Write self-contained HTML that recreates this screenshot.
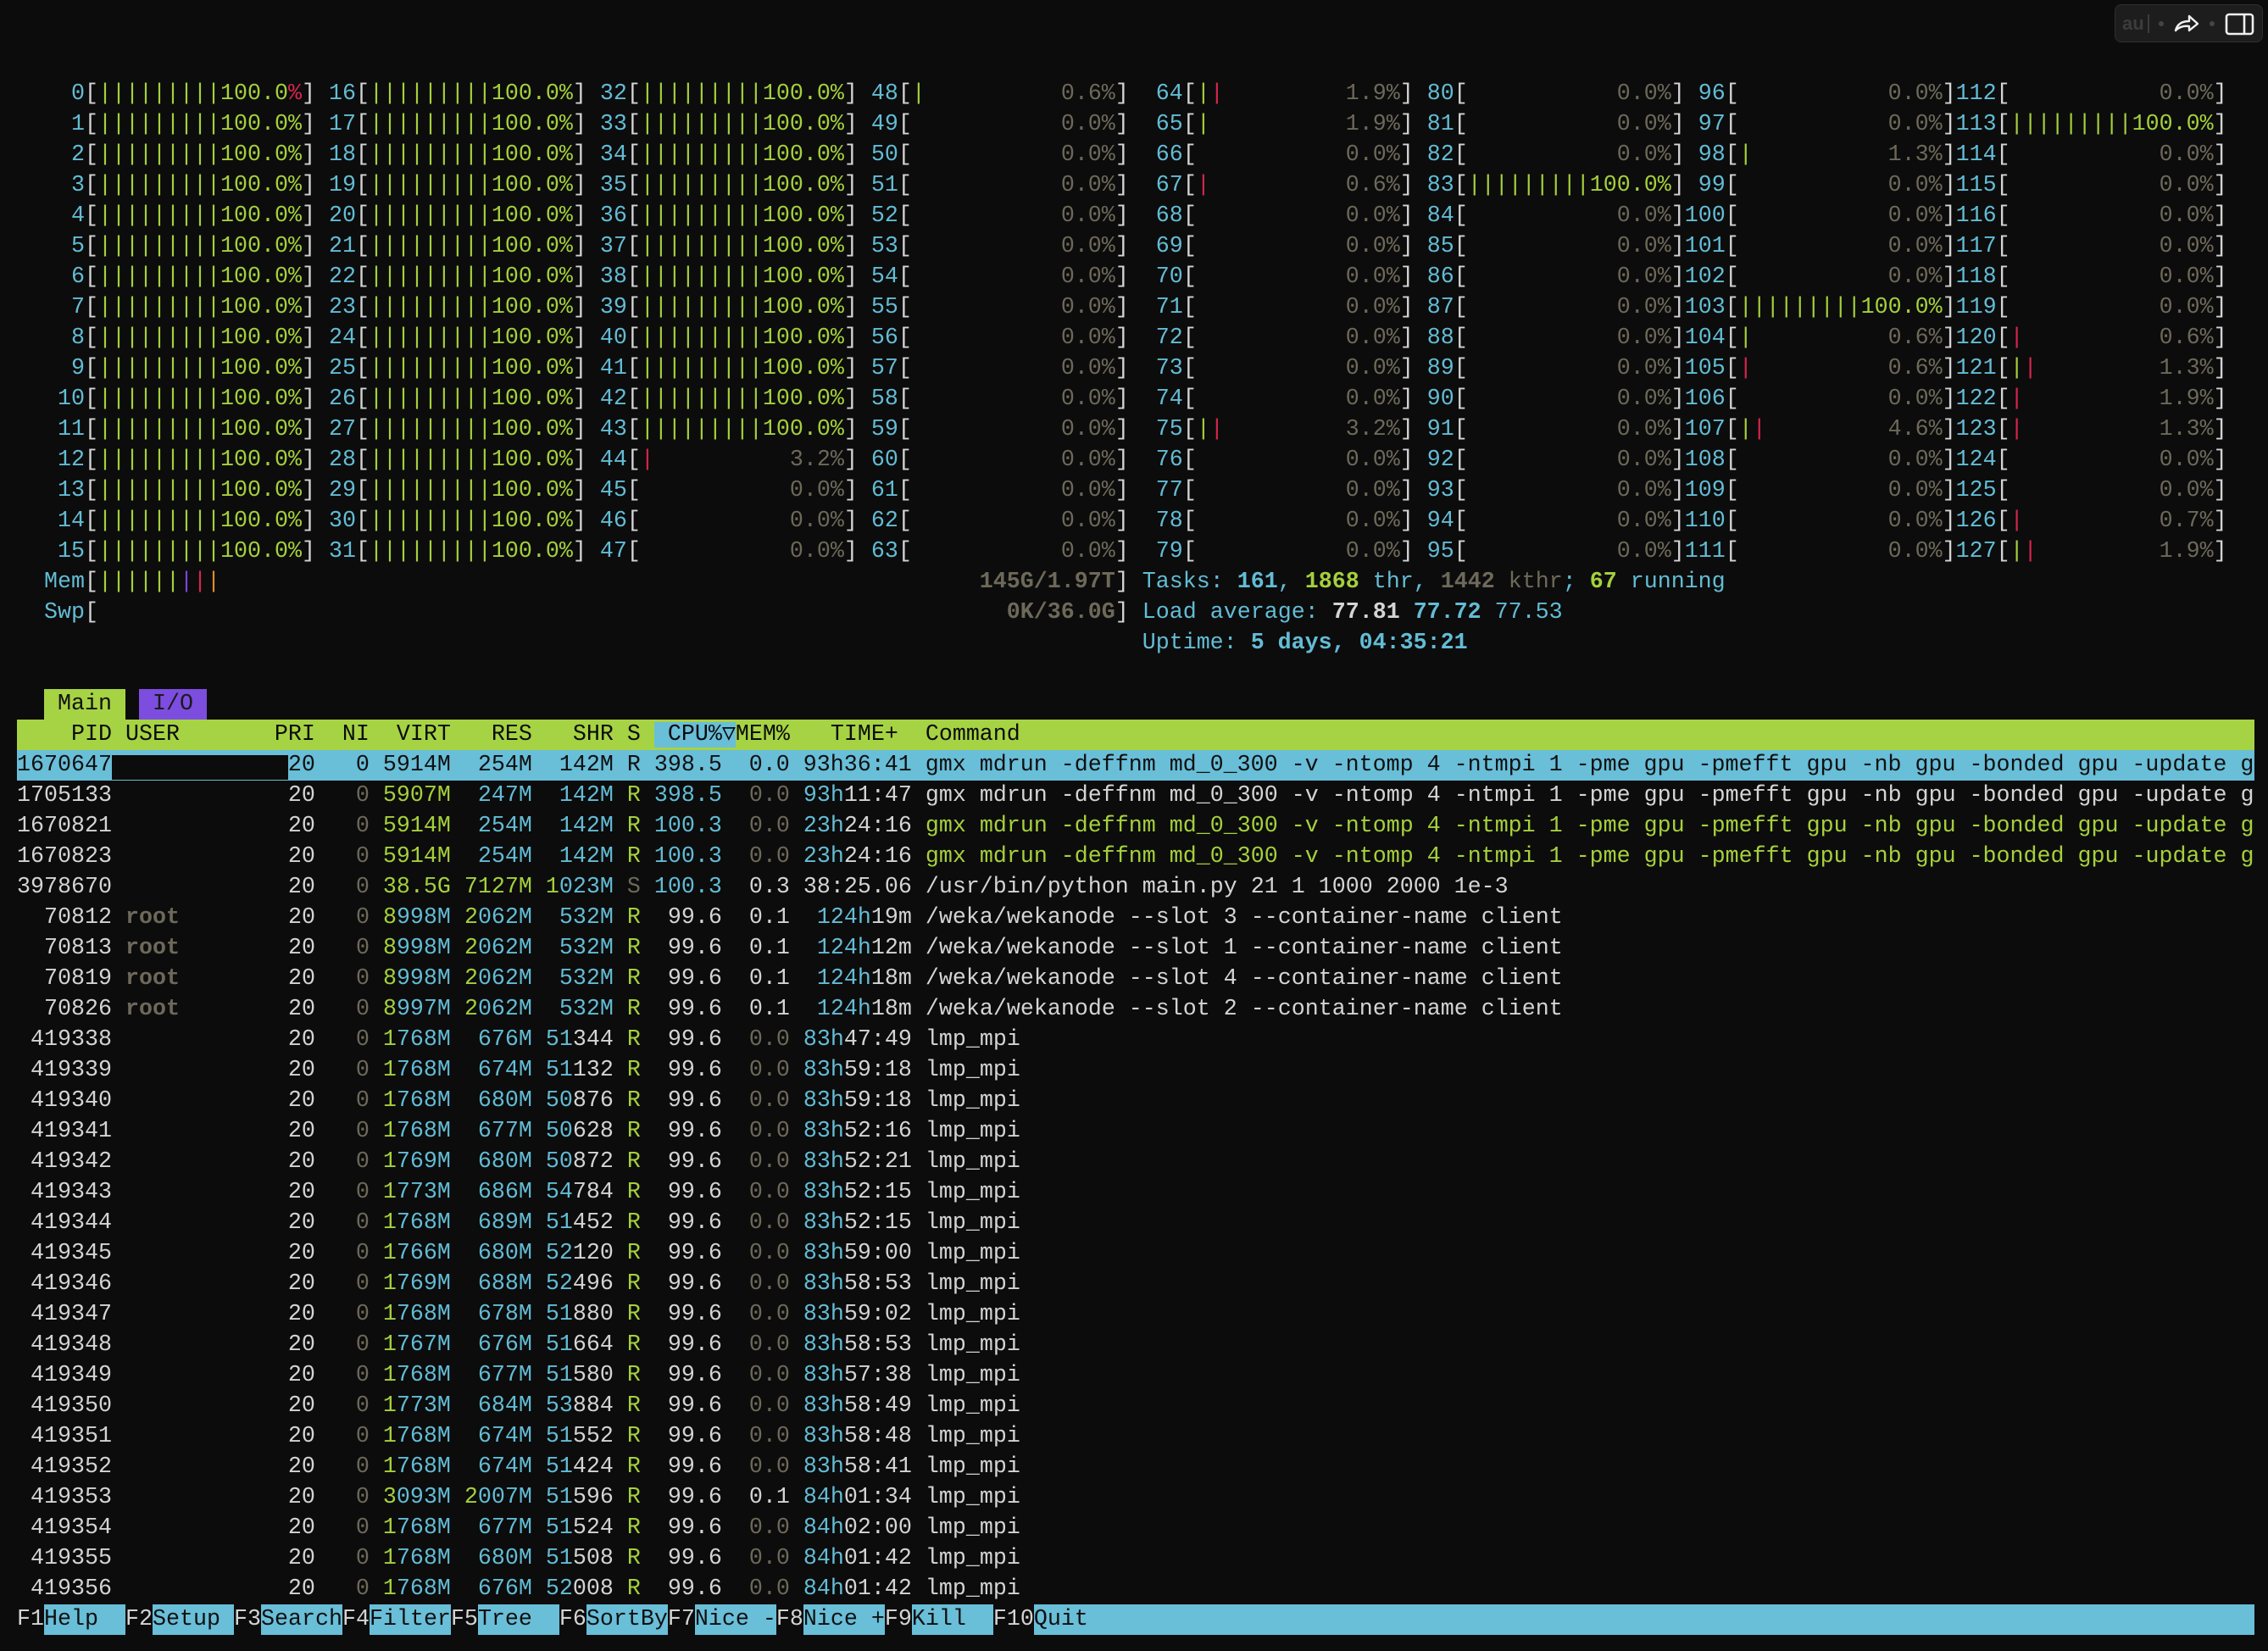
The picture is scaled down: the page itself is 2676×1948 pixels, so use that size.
<!DOCTYPE html>
<html><head><meta charset="utf-8"><style>
html,body{margin:0;padding:0;background:#0c0c0c;}
body{width:2676px;height:1948px;position:relative;overflow:hidden;}
pre{position:absolute;left:20px;top:93px;margin:0;font-family:"Liberation Mono","DejaVu Sans Mono",monospace;font-size:26.667px;line-height:36px;color:#d4d4d4;white-space:pre;}
c{color:#63bcd5}g{color:#a5d03c}y{color:#6d695a}r{color:#d7254e}pu{color:#7b45de}or{color:#e38a31}
b{font-weight:bold}
.hd{display:inline-block;height:36px;vertical-align:top;background:#a6d343;color:#0c0c0c;width:2640px}
.hc{background:#69bed8}
.sel{display:inline-block;height:36px;vertical-align:top;background:#69bed8;color:#101010;width:2640px}
.tm{display:inline-block;height:36px;vertical-align:top;background:#a6d343;color:#111}
.ti{display:inline-block;height:36px;vertical-align:top;background:#7c4ddf;color:#1a1a1a}
q{display:inline-block;height:36px;vertical-align:top;background:#69bed8;color:#101010;quotes:none}
q:before,q:after{content:none}
.blk{position:absolute;left:132px;top:891px;width:208px;height:29px;background:#0c0c0c}
.wd{position:absolute;left:2495px;top:5px;width:175px;height:45px;background:#1d1d1d;border:1px solid #2f2f2f;border-radius:8px;box-sizing:border-box}
</style></head><body>
<pre>  <c>  0</c>[<g>|||||||||100.0</g><r>%</r>]<c> 16</c>[<g>|||||||||100.0%</g>]<c> 32</c>[<g>|||||||||100.0%</g>]<c> 48</c>[<g>|</g><y>          0.6%</y>] <c> 64</c>[<g>|</g><r>|</r><y>         1.9%</y>]<c> 80</c>[<y>           0.0%</y>]<c> 96</c>[<y>           0.0%</y>]<c>112</c>[<y>           0.0%</y>]
  <c>  1</c>[<g>|||||||||100.0%</g>]<c> 17</c>[<g>|||||||||100.0%</g>]<c> 33</c>[<g>|||||||||100.0%</g>]<c> 49</c>[<y>           0.0%</y>] <c> 65</c>[<g>|</g><y>          1.9%</y>]<c> 81</c>[<y>           0.0%</y>]<c> 97</c>[<y>           0.0%</y>]<c>113</c>[<g>|||||||||100.0%</g>]
  <c>  2</c>[<g>|||||||||100.0%</g>]<c> 18</c>[<g>|||||||||100.0%</g>]<c> 34</c>[<g>|||||||||100.0%</g>]<c> 50</c>[<y>           0.0%</y>] <c> 66</c>[<y>           0.0%</y>]<c> 82</c>[<y>           0.0%</y>]<c> 98</c>[<g>|</g><y>          1.3%</y>]<c>114</c>[<y>           0.0%</y>]
  <c>  3</c>[<g>|||||||||100.0%</g>]<c> 19</c>[<g>|||||||||100.0%</g>]<c> 35</c>[<g>|||||||||100.0%</g>]<c> 51</c>[<y>           0.0%</y>] <c> 67</c>[<r>|</r><y>          0.6%</y>]<c> 83</c>[<g>|||||||||100.0%</g>]<c> 99</c>[<y>           0.0%</y>]<c>115</c>[<y>           0.0%</y>]
  <c>  4</c>[<g>|||||||||100.0%</g>]<c> 20</c>[<g>|||||||||100.0%</g>]<c> 36</c>[<g>|||||||||100.0%</g>]<c> 52</c>[<y>           0.0%</y>] <c> 68</c>[<y>           0.0%</y>]<c> 84</c>[<y>           0.0%</y>]<c>100</c>[<y>           0.0%</y>]<c>116</c>[<y>           0.0%</y>]
  <c>  5</c>[<g>|||||||||100.0%</g>]<c> 21</c>[<g>|||||||||100.0%</g>]<c> 37</c>[<g>|||||||||100.0%</g>]<c> 53</c>[<y>           0.0%</y>] <c> 69</c>[<y>           0.0%</y>]<c> 85</c>[<y>           0.0%</y>]<c>101</c>[<y>           0.0%</y>]<c>117</c>[<y>           0.0%</y>]
  <c>  6</c>[<g>|||||||||100.0%</g>]<c> 22</c>[<g>|||||||||100.0%</g>]<c> 38</c>[<g>|||||||||100.0%</g>]<c> 54</c>[<y>           0.0%</y>] <c> 70</c>[<y>           0.0%</y>]<c> 86</c>[<y>           0.0%</y>]<c>102</c>[<y>           0.0%</y>]<c>118</c>[<y>           0.0%</y>]
  <c>  7</c>[<g>|||||||||100.0%</g>]<c> 23</c>[<g>|||||||||100.0%</g>]<c> 39</c>[<g>|||||||||100.0%</g>]<c> 55</c>[<y>           0.0%</y>] <c> 71</c>[<y>           0.0%</y>]<c> 87</c>[<y>           0.0%</y>]<c>103</c>[<g>|||||||||100.0%</g>]<c>119</c>[<y>           0.0%</y>]
  <c>  8</c>[<g>|||||||||100.0%</g>]<c> 24</c>[<g>|||||||||100.0%</g>]<c> 40</c>[<g>|||||||||100.0%</g>]<c> 56</c>[<y>           0.0%</y>] <c> 72</c>[<y>           0.0%</y>]<c> 88</c>[<y>           0.0%</y>]<c>104</c>[<g>|</g><y>          0.6%</y>]<c>120</c>[<r>|</r><y>          0.6%</y>]
  <c>  9</c>[<g>|||||||||100.0%</g>]<c> 25</c>[<g>|||||||||100.0%</g>]<c> 41</c>[<g>|||||||||100.0%</g>]<c> 57</c>[<y>           0.0%</y>] <c> 73</c>[<y>           0.0%</y>]<c> 89</c>[<y>           0.0%</y>]<c>105</c>[<r>|</r><y>          0.6%</y>]<c>121</c>[<g>|</g><r>|</r><y>         1.3%</y>]
  <c> 10</c>[<g>|||||||||100.0%</g>]<c> 26</c>[<g>|||||||||100.0%</g>]<c> 42</c>[<g>|||||||||100.0%</g>]<c> 58</c>[<y>           0.0%</y>] <c> 74</c>[<y>           0.0%</y>]<c> 90</c>[<y>           0.0%</y>]<c>106</c>[<y>           0.0%</y>]<c>122</c>[<r>|</r><y>          1.9%</y>]
  <c> 11</c>[<g>|||||||||100.0%</g>]<c> 27</c>[<g>|||||||||100.0%</g>]<c> 43</c>[<g>|||||||||100.0%</g>]<c> 59</c>[<y>           0.0%</y>] <c> 75</c>[<g>|</g><r>|</r><y>         3.2%</y>]<c> 91</c>[<y>           0.0%</y>]<c>107</c>[<g>|</g><r>|</r><y>         4.6%</y>]<c>123</c>[<r>|</r><y>          1.3%</y>]
  <c> 12</c>[<g>|||||||||100.0%</g>]<c> 28</c>[<g>|||||||||100.0%</g>]<c> 44</c>[<r>|</r><y>          3.2%</y>]<c> 60</c>[<y>           0.0%</y>] <c> 76</c>[<y>           0.0%</y>]<c> 92</c>[<y>           0.0%</y>]<c>108</c>[<y>           0.0%</y>]<c>124</c>[<y>           0.0%</y>]
  <c> 13</c>[<g>|||||||||100.0%</g>]<c> 29</c>[<g>|||||||||100.0%</g>]<c> 45</c>[<y>           0.0%</y>]<c> 61</c>[<y>           0.0%</y>] <c> 77</c>[<y>           0.0%</y>]<c> 93</c>[<y>           0.0%</y>]<c>109</c>[<y>           0.0%</y>]<c>125</c>[<y>           0.0%</y>]
  <c> 14</c>[<g>|||||||||100.0%</g>]<c> 30</c>[<g>|||||||||100.0%</g>]<c> 46</c>[<y>           0.0%</y>]<c> 62</c>[<y>           0.0%</y>] <c> 78</c>[<y>           0.0%</y>]<c> 94</c>[<y>           0.0%</y>]<c>110</c>[<y>           0.0%</y>]<c>126</c>[<r>|</r><y>          0.7%</y>]
  <c> 15</c>[<g>|||||||||100.0%</g>]<c> 31</c>[<g>|||||||||100.0%</g>]<c> 47</c>[<y>           0.0%</y>]<c> 63</c>[<y>           0.0%</y>] <c> 79</c>[<y>           0.0%</y>]<c> 95</c>[<y>           0.0%</y>]<c>111</c>[<y>           0.0%</y>]<c>127</c>[<g>|</g><r>|</r><y>         1.9%</y>]
  <c>Mem</c>[<g>||||||</g><pu>|</pu><r>|</r><or>|</or>                                                        <y><b>145G/1.97T</b></y>] <c>Tasks: <b>161</b>, </c><g><b>1868</b></g><c> thr, </c><y><b>1442</b> kthr</y><c>; </c><g><b>67</b></g><c> running</c>
  <c>Swp</c>[                                                                   <y><b>0K/36.0G</b></y>] <c>Load average: </c><b>77.81 </b><c><b>77.72</b> 77.53</c>
                                                                                   <c>Uptime: <b>5 days, 04:35:21</b></c>

  <span class="tm"> Main </span> <span class="ti"> I/O </span>
<span class="hd">    PID USER       PRI  NI  VIRT   RES   SHR S <span class="hc"> CPU%▽</span>MEM%   TIME+  Command</span>
<span class="sel">1670647             20   0 5914M  254M  142M R 398.5  0.0 93h36:41 gmx mdrun -deffnm md_0_300 -v -ntomp 4 -ntmpi 1 -pme gpu -pmefft gpu -nb gpu -bonded gpu -update g</span>
1705133             20   <y>0</y> <g>5907M</g> <c> 247M</c> <c> 142M</c> <g>R</g> <c>398.5</c> <y> 0.0</y> <c>93h</c>11:47 gmx mdrun -deffnm md_0_300 -v -ntomp 4 -ntmpi 1 -pme gpu -pmefft gpu -nb gpu -bonded gpu -update g
1670821             20   <y>0</y> <g>5914M</g> <c> 254M</c> <c> 142M</c> <g>R</g> <c>100.3</c> <y> 0.0</y> <c>23h</c>24:16 <g>gmx mdrun -deffnm md_0_300 -v -ntomp 4 -ntmpi 1 -pme gpu -pmefft gpu -nb gpu -bonded gpu -update g</g>
1670823             20   <y>0</y> <g>5914M</g> <c> 254M</c> <c> 142M</c> <g>R</g> <c>100.3</c> <y> 0.0</y> <c>23h</c>24:16 <g>gmx mdrun -deffnm md_0_300 -v -ntomp 4 -ntmpi 1 -pme gpu -pmefft gpu -nb gpu -bonded gpu -update g</g>
3978670             20   <y>0</y> <g>38.5G</g> <g>7127M</g> <g>1</g><c>023M</c> <y>S</y> <c>100.3</c>  0.3 38:25.06 /usr/bin/python main.py 21 1 1000 2000 1e-3
  70812 <y><b>root</b></y>        20   <y>0</y> <g>8</g><c>998M</c> <g>2</g><c>062M</c> <c> 532M</c> <g>R</g>  99.6  0.1  <c>124h</c>19m /weka/wekanode --slot 3 --container-name client
  70813 <y><b>root</b></y>        20   <y>0</y> <g>8</g><c>998M</c> <g>2</g><c>062M</c> <c> 532M</c> <g>R</g>  99.6  0.1  <c>124h</c>12m /weka/wekanode --slot 1 --container-name client
  70819 <y><b>root</b></y>        20   <y>0</y> <g>8</g><c>998M</c> <g>2</g><c>062M</c> <c> 532M</c> <g>R</g>  99.6  0.1  <c>124h</c>18m /weka/wekanode --slot 4 --container-name client
  70826 <y><b>root</b></y>        20   <y>0</y> <g>8</g><c>997M</c> <g>2</g><c>062M</c> <c> 532M</c> <g>R</g>  99.6  0.1  <c>124h</c>18m /weka/wekanode --slot 2 --container-name client
 419338             20   <y>0</y> <g>1</g><c>768M</c> <c> 676M</c> <c>51</c>344 <g>R</g>  99.6 <y> 0.0</y> <c>83h</c>47:49 lmp_mpi
 419339             20   <y>0</y> <g>1</g><c>768M</c> <c> 674M</c> <c>51</c>132 <g>R</g>  99.6 <y> 0.0</y> <c>83h</c>59:18 lmp_mpi
 419340             20   <y>0</y> <g>1</g><c>768M</c> <c> 680M</c> <c>50</c>876 <g>R</g>  99.6 <y> 0.0</y> <c>83h</c>59:18 lmp_mpi
 419341             20   <y>0</y> <g>1</g><c>768M</c> <c> 677M</c> <c>50</c>628 <g>R</g>  99.6 <y> 0.0</y> <c>83h</c>52:16 lmp_mpi
 419342             20   <y>0</y> <g>1</g><c>769M</c> <c> 680M</c> <c>50</c>872 <g>R</g>  99.6 <y> 0.0</y> <c>83h</c>52:21 lmp_mpi
 419343             20   <y>0</y> <g>1</g><c>773M</c> <c> 686M</c> <c>54</c>784 <g>R</g>  99.6 <y> 0.0</y> <c>83h</c>52:15 lmp_mpi
 419344             20   <y>0</y> <g>1</g><c>768M</c> <c> 689M</c> <c>51</c>452 <g>R</g>  99.6 <y> 0.0</y> <c>83h</c>52:15 lmp_mpi
 419345             20   <y>0</y> <g>1</g><c>766M</c> <c> 680M</c> <c>52</c>120 <g>R</g>  99.6 <y> 0.0</y> <c>83h</c>59:00 lmp_mpi
 419346             20   <y>0</y> <g>1</g><c>769M</c> <c> 688M</c> <c>52</c>496 <g>R</g>  99.6 <y> 0.0</y> <c>83h</c>58:53 lmp_mpi
 419347             20   <y>0</y> <g>1</g><c>768M</c> <c> 678M</c> <c>51</c>880 <g>R</g>  99.6 <y> 0.0</y> <c>83h</c>59:02 lmp_mpi
 419348             20   <y>0</y> <g>1</g><c>767M</c> <c> 676M</c> <c>51</c>664 <g>R</g>  99.6 <y> 0.0</y> <c>83h</c>58:53 lmp_mpi
 419349             20   <y>0</y> <g>1</g><c>768M</c> <c> 677M</c> <c>51</c>580 <g>R</g>  99.6 <y> 0.0</y> <c>83h</c>57:38 lmp_mpi
 419350             20   <y>0</y> <g>1</g><c>773M</c> <c> 684M</c> <c>53</c>884 <g>R</g>  99.6 <y> 0.0</y> <c>83h</c>58:49 lmp_mpi
 419351             20   <y>0</y> <g>1</g><c>768M</c> <c> 674M</c> <c>51</c>552 <g>R</g>  99.6 <y> 0.0</y> <c>83h</c>58:48 lmp_mpi
 419352             20   <y>0</y> <g>1</g><c>768M</c> <c> 674M</c> <c>51</c>424 <g>R</g>  99.6 <y> 0.0</y> <c>83h</c>58:41 lmp_mpi
 419353             20   <y>0</y> <g>3</g><c>093M</c> <g>2</g><c>007M</c> <c>51</c>596 <g>R</g>  99.6  0.1 <c>84h</c>01:34 lmp_mpi
 419354             20   <y>0</y> <g>1</g><c>768M</c> <c> 677M</c> <c>51</c>524 <g>R</g>  99.6 <y> 0.0</y> <c>84h</c>02:00 lmp_mpi
 419355             20   <y>0</y> <g>1</g><c>768M</c> <c> 680M</c> <c>51</c>508 <g>R</g>  99.6 <y> 0.0</y> <c>84h</c>01:42 lmp_mpi
 419356             20   <y>0</y> <g>1</g><c>768M</c> <c> 676M</c> <c>52</c>008 <g>R</g>  99.6 <y> 0.0</y> <c>84h</c>01:42 lmp_mpi
F1<q>Help  </q>F2<q>Setup </q>F3<q>Search</q>F4<q>Filter</q>F5<q>Tree  </q>F6<q>SortBy</q>F7<q>Nice -</q>F8<q>Nice +</q>F9<q>Kill  </q>F10<q style="width:1440px">Quit</q></pre>
<div class="blk"></div>
<div class="wd"></div>
<div style="position:absolute;left:2504px;top:13px;font-family:'Liberation Sans',sans-serif;font-weight:bold;font-size:22px;line-height:30px;color:#3c3c3c">au</div>
<div style="position:absolute;left:2534px;top:17px;width:2px;height:22px;background:#3c3c3c"></div>
<div style="position:absolute;left:2547px;top:25px;width:6px;height:6px;border-radius:3px;background:#444"></div>
<div style="position:absolute;left:2607px;top:25px;width:6px;height:6px;border-radius:3px;background:#444"></div>
<svg style="position:absolute;left:2564px;top:14px" width="32" height="28" viewBox="0 0 32 28"><path d="M3 22 C5 14 11 11 19 11 L19 5 L29 14 L19 22 L19 17 C12 16 7 18 3 22 Z" fill="none" stroke="#f0f0f0" stroke-width="2.4" stroke-linejoin="round"/></svg>
<svg style="position:absolute;left:2625px;top:15px" width="36" height="28" viewBox="0 0 36 28"><rect x="2" y="2" width="31" height="23" rx="3" fill="none" stroke="#f0f0f0" stroke-width="2.6"/><line x1="23" y1="2" x2="23" y2="25" stroke="#f0f0f0" stroke-width="2.6"/></svg>
</body></html>
